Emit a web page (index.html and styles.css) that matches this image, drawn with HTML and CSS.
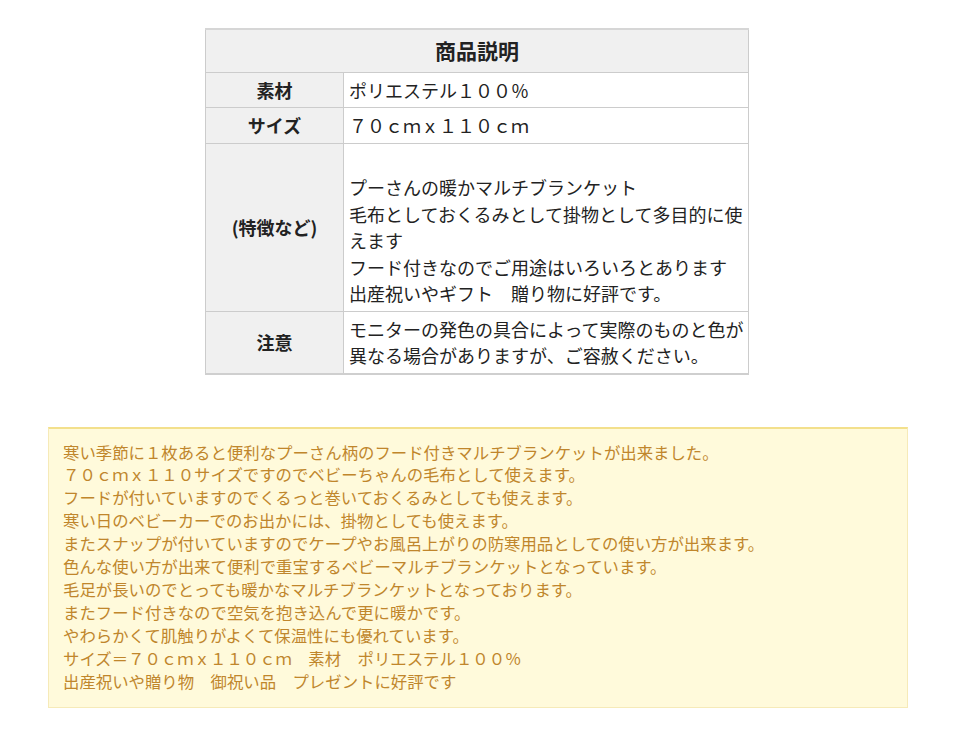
FILE: index.html
```html
<!DOCTYPE html>
<html lang="ja">
<head>
  <meta charset="UTF-8" />
  <title>商品説明</title>
  <link rel="stylesheet" href="styles.css">
</head>
<body>
  <div class="page">
    <table class="spec-table">
      <tr>
        <th class="spec-title" colspan="2">商品説明</th>
      </tr>
      <tr>
        <th class="spec-label">素材</th>
        <td class="spec-value">ポリエステル１００％</td>
      </tr>
      <tr>
        <th class="spec-label">サイズ</th>
        <td class="spec-value">７０ｃｍｘ１１０ｃｍ</td>
      </tr>
      <tr>
        <th class="spec-label">(特徴など)</th>
        <td class="spec-value"><br>プーさんの暖かマルチブランケット<br>毛布としておくるみとして掛物として多目的に使えます<br>フード付きなのでご用途はいろいろとあります<br>出産祝いやギフト　贈り物に好評です。</td>
      </tr>
      <tr>
        <th class="spec-label">注意</th>
        <td class="spec-value">モニターの発色の具合によって実際のものと色が異なる場合がありますが、ご容赦ください。</td>
      </tr>
    </table>

    <!-- description box -->
    <div class="note-box">
      寒い季節に１枚あると便利なプーさん柄のフード付きマルチブランケットが出来ました。<br>
      ７０ｃｍｘ１１０サイズですのでベビーちゃんの毛布として使えます。<br>
      フードが付いていますのでくるっと巻いておくるみとしても使えます。<br>
      寒い日のベビーカーでのお出かには、掛物としても使えます。<br>
      またスナップが付いていますのでケープやお風呂上がりの防寒用品としての使い方が出来ます。<br>
      色んな使い方が出来て便利で重宝するベビーマルチブランケットとなっています。<br>
      毛足が長いのでとっても暖かなマルチブランケットとなっております。<br>
      またフード付きなので空気を抱き込んで更に暖かです。<br>
      やわらかくて肌触りがよくて保温性にも優れています。<br>
      サイズ＝７０ｃｍｘ１１０ｃｍ　素材　ポリエステル１００％<br>
      出産祝いや贈り物　御祝い品　プレゼントに好評です
    </div>
  </div>
</body>
</html>
```

FILE: styles.css
```css
* { box-sizing: border-box; }
body {
  margin: 0;
  background: #fff;
  font-family: "Noto Sans CJK JP", sans-serif;
  color: #222;
}
.page {
  width: 860px;
  margin: 0 auto;
  padding-top: 28px;
}

.spec-table {
  width: 544px;
  margin-left: 157px;
  border-collapse: collapse;
  border-top: 2px solid #d6d6d6;
  border-bottom: 2px solid #cfcfcf;
  font-size: 18px;
  line-height: 26.5px;
}
.spec-table th,
.spec-table td {
  border: 1px solid #cccccc;
}
.spec-title {
  background: #f0f0f0;
  font-size: 21px;
  font-weight: bold;
  text-align: center;
  padding: 7px 0 8px;
}
.spec-label {
  width: 138px;
  background: #f0f0f0;
  font-weight: bold;
  text-align: center;
  padding: 4px 0 4px;
}
.spec-value {
  background: #fff;
  text-align: left;
  vertical-align: middle;
  padding: 4px 0 4px 5px;
}

.note-box {
  margin-top: 52px;
  background: #fffadb;
  border: 1px solid #f6eab8;
  border-top: 2px solid #f3e08c;
  padding: 12px 14px 15px;
  color: #c0862c;
  font-size: 16.4px;
  line-height: 22.9px;
}
```
